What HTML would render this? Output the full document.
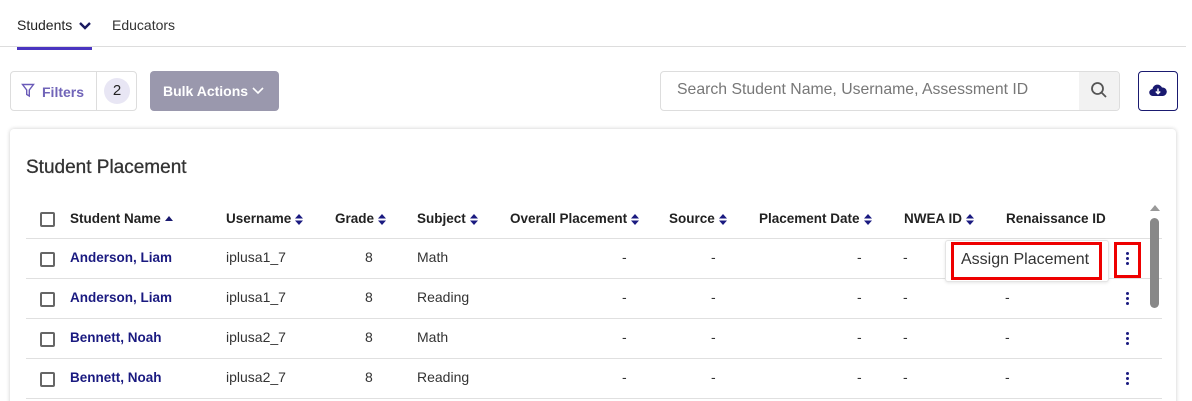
<!DOCTYPE html>
<html><head><style>
*{margin:0;padding:0;box-sizing:border-box}
html,body{width:1192px;height:401px;overflow:hidden}
body{background:#fff;font-family:"Liberation Sans",sans-serif;position:relative;color:#333}
.a{position:absolute;white-space:nowrap}
.h{font-size:13.5px;font-weight:bold;color:#222;top:211px}
.c{font-size:14px;color:#333}
.n{font-size:13.5px;font-weight:bold;color:#1a1a80}
.cb{position:absolute;left:40px;width:15px;height:15px;border:2px solid #666;border-radius:2px}
.line{position:absolute;left:26px;width:1136px;height:1px;background:#e0e0e0}
.k{position:absolute;left:1126px;width:3px}
.k i{display:block;width:3px;height:3px;background:#1a1a80;border-radius:50%;margin-bottom:2px}
.s{display:inline-block;vertical-align:middle;margin-left:4px}
</style></head><body>
<div class="a" style="left:17px;top:17px;font-size:14px;color:#222">Students</div>
<svg class="a" style="left:78px;top:21px" width="14" height="10"><path d="M2 2l5 5 5-5" stroke="#1a1a60" stroke-width="2.4" fill="none"/></svg>
<div class="a" style="left:112px;top:17px;font-size:14px;color:#333">Educators</div>
<div class="a" style="left:0;top:46px;width:1186px;height:1px;background:#ddd"></div>
<div class="a" style="left:17px;top:47px;width:75px;height:3px;background:#4a35c0"></div>

<div class="a" style="left:10px;top:71px;width:127px;height:40px;border:1px solid #ddd;border-radius:4px"></div>
<div class="a" style="left:96px;top:72px;width:1px;height:38px;background:#ddd"></div>
<svg class="a" style="left:21px;top:83px" width="14" height="15"><path d="M1.5 1.5h11l-4.2 5.5v6l-2.6-1.5v-4.5z" stroke="#6a5ab8" stroke-width="1.4" fill="none"/></svg>
<div class="a" style="left:42px;top:84px;font-size:14px;font-weight:bold;color:#7064b8">Filters</div>
<div class="a" style="left:104px;top:78px;width:26px;height:26px;border-radius:50%;background:#e8e6f4;font-size:15px;color:#222;text-align:center;line-height:26px">2</div>
<div class="a" style="left:150px;top:71px;width:129px;height:40px;background:#9a98ad;border-radius:4px"></div>
<div class="a" style="left:163px;top:83px;font-size:14px;font-weight:bold;color:#fff">Bulk Actions</div>
<svg class="a" style="left:251px;top:86px" width="14" height="10"><path d="M2 2l5 5 5-5" stroke="#fff" stroke-width="1.6" fill="none"/></svg>

<div class="a" style="left:660px;top:71px;width:460px;height:40px;border:1px solid #ddd;border-radius:4px;overflow:hidden"><div style="position:absolute;right:0;top:0;width:40px;height:40px;background:#f2f2f2"></div></div>
<div class="a" style="left:677px;top:81px;font-size:15.8px;color:#777">Search Student Name, Username, Assessment ID</div>
<svg class="a" style="left:1090px;top:81px" width="18" height="18"><circle cx="7.5" cy="7.5" r="5.5" stroke="#555" stroke-width="1.8" fill="none"/><path d="M11.5 11.5l4.5 4.5" stroke="#555" stroke-width="1.8"/></svg>
<div class="a" style="left:1138px;top:71px;width:40px;height:40px;border:1.5px solid #1a1a70;border-radius:4px"></div>
<svg class="a" style="left:1149px;top:83px" width="18" height="14"><path d="M4 13a3.5 3.5 0 0 1-.5-7 5 5 0 0 1 9.5-1.5A4 4 0 0 1 14 13z" fill="#1a1a70"/><path d="M9 5.5v5M6.8 8.5L9 10.7l2.2-2.2" stroke="#fff" stroke-width="1.5" fill="none"/></svg>

<div class="a" style="left:10px;top:129px;width:1166px;height:290px;border-radius:4px;box-shadow:0 0 4px rgba(0,0,0,.2);background:#fff"></div>
<div class="a" style="left:26px;top:157px;font-size:19px;color:#333;-webkit-text-stroke:0.3px #333">Student Placement</div>

<div class="cb" style="top:212px"></div>
<div class="a h" style="left:70px">Student Name<svg class="s" width="8" height="6"><path d="M0 5h8L4 0z" fill="#1a1a70"/></svg></div>
<div class="a h" style="left:226px">Username<svg class="s" width="8" height="11"><path d="M0 4.5h8L4 0zM0 6.5h8L4 11z" fill="#1a1a80"/></svg></div>
<div class="a h" style="left:335px">Grade<svg class="s" width="8" height="11"><path d="M0 4.5h8L4 0zM0 6.5h8L4 11z" fill="#1a1a80"/></svg></div>
<div class="a h" style="left:417px">Subject<svg class="s" width="8" height="11"><path d="M0 4.5h8L4 0zM0 6.5h8L4 11z" fill="#1a1a80"/></svg></div>
<div class="a h" style="left:510px">Overall Placement<svg class="s" width="8" height="11"><path d="M0 4.5h8L4 0zM0 6.5h8L4 11z" fill="#1a1a80"/></svg></div>
<div class="a h" style="left:669px">Source<svg class="s" width="8" height="11"><path d="M0 4.5h8L4 0zM0 6.5h8L4 11z" fill="#1a1a80"/></svg></div>
<div class="a h" style="left:759px">Placement Date<svg class="s" width="8" height="11"><path d="M0 4.5h8L4 0zM0 6.5h8L4 11z" fill="#1a1a80"/></svg></div>
<div class="a h" style="left:904px">NWEA ID<svg class="s" width="8" height="11"><path d="M0 4.5h8L4 0zM0 6.5h8L4 11z" fill="#1a1a80"/></svg></div>
<div class="a h" style="left:1006px">Renaissance ID</div>

<div class="line" style="top:238px"></div>
<div class="line" style="top:278px"></div>
<div class="line" style="top:318px"></div>
<div class="line" style="top:358px"></div>
<div class="line" style="top:398px"></div>

<div class="cb" style="top:252px"></div><div class="a n" style="left:70px;top:250px">Anderson, Liam</div><div class="a c" style="left:226px;top:249px">iplusa1_7</div><div class="a c" style="left:365px;top:249px">8</div><div class="a c" style="left:417px;top:249px">Math</div><div class="a c" style="left:622px;top:249px">-</div><div class="a c" style="left:711px;top:249px">-</div><div class="a c" style="left:857px;top:249px">-</div><div class="a c" style="left:903px;top:249px">-</div>
<div class="cb" style="top:292px"></div><div class="a n" style="left:70px;top:290px">Anderson, Liam</div><div class="a c" style="left:226px;top:289px">iplusa1_7</div><div class="a c" style="left:365px;top:289px">8</div><div class="a c" style="left:417px;top:289px">Reading</div><div class="a c" style="left:622px;top:289px">-</div><div class="a c" style="left:711px;top:289px">-</div><div class="a c" style="left:857px;top:289px">-</div><div class="a c" style="left:903px;top:289px">-</div><div class="a c" style="left:1005px;top:289px">-</div>
<div class="cb" style="top:332px"></div><div class="a n" style="left:70px;top:330px">Bennett, Noah</div><div class="a c" style="left:226px;top:329px">iplusa2_7</div><div class="a c" style="left:365px;top:329px">8</div><div class="a c" style="left:417px;top:329px">Math</div><div class="a c" style="left:622px;top:329px">-</div><div class="a c" style="left:711px;top:329px">-</div><div class="a c" style="left:857px;top:329px">-</div><div class="a c" style="left:903px;top:329px">-</div><div class="a c" style="left:1005px;top:329px">-</div>
<div class="cb" style="top:372px"></div><div class="a n" style="left:70px;top:370px">Bennett, Noah</div><div class="a c" style="left:226px;top:369px">iplusa2_7</div><div class="a c" style="left:365px;top:369px">8</div><div class="a c" style="left:417px;top:369px">Reading</div><div class="a c" style="left:622px;top:369px">-</div><div class="a c" style="left:711px;top:369px">-</div><div class="a c" style="left:857px;top:369px">-</div><div class="a c" style="left:903px;top:369px">-</div><div class="a c" style="left:1005px;top:369px">-</div>

<div class="k" style="top:252px"><i></i><i></i><i></i></div>
<div class="k" style="top:292px"><i></i><i></i><i></i></div>
<div class="k" style="top:332px"><i></i><i></i><i></i></div>
<div class="k" style="top:372px"><i></i><i></i><i></i></div>

<div class="a" style="left:945px;top:240px;width:164px;height:42px;background:#fff;border:1px solid #e4e4e4;border-radius:3px;box-shadow:0 1px 3px rgba(0,0,0,.1)"></div>
<div class="a" style="left:951px;top:242px;width:151px;height:38px;border:3px solid #e00"></div>
<div class="a" style="left:961px;top:251px;font-size:16px;color:#333">Assign Placement</div>
<div class="a" style="left:1114px;top:242px;width:27px;height:36px;border:3px solid #e00"></div>

<svg class="a" style="left:1150px;top:205px" width="10" height="6"><path d="M0 6h10L5 0z" fill="#999"/></svg>
<div class="a" style="left:1150px;top:218px;width:9px;height:90px;background:#888;border-radius:5px"></div>
</body></html>
